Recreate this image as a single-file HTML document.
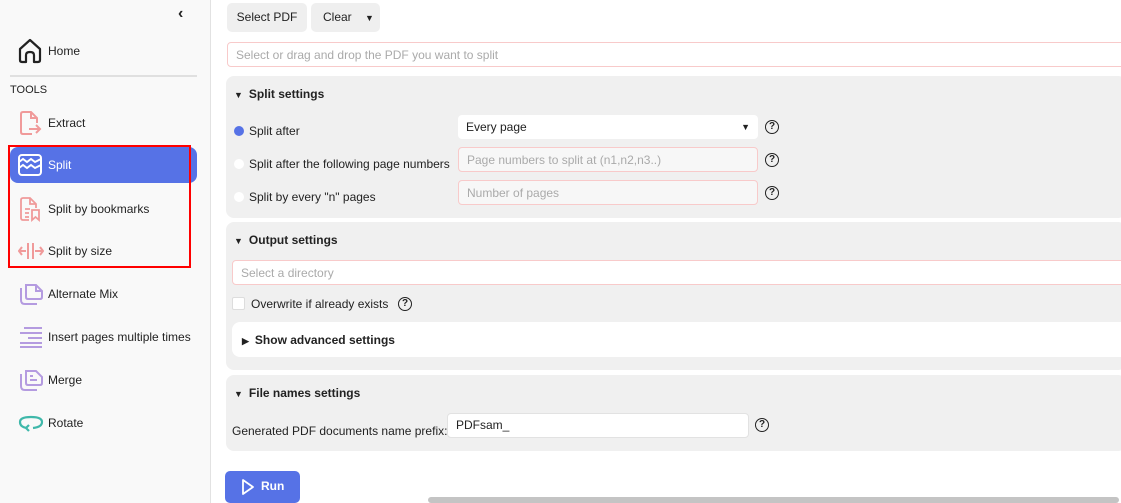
<!DOCTYPE html>
<html><head><meta charset="utf-8"><style>
*{box-sizing:border-box;margin:0;padding:0}
body{width:1121px;height:503px;overflow:hidden;background:#fff;font-family:"Liberation Sans",sans-serif;font-size:12px;color:#222;position:relative}
.sb{position:absolute;left:0;top:0;width:211px;height:503px;background:#f9f9f9;border-right:1px solid #e2e2e2}
.it{position:absolute;left:10px;width:187px;height:36px;display:flex;align-items:center;font-size:12px}
.it svg{position:absolute;left:8px}
.it span{position:absolute;left:38px}
.a{position:absolute}
.panel{position:absolute;left:226px;width:900px;background:#f0f0f0;border-radius:8px}
.h{position:absolute;font-weight:bold;font-size:12px}
.in{position:absolute;background:#fff;border:1px solid #f8caca;border-radius:4px;color:#aaa;font-size:12px;padding-left:8px;display:flex;align-items:center}
.q{position:absolute;width:14px;height:14px;border:1.5px solid #222;border-radius:50%;font-size:10px;font-weight:bold;text-align:center;line-height:11px}
.tri{font-size:9px;margin-right:6px}
</style></head><body>
<div class="sb">
<div class="a" style="left:178px;top:5px;font-size:16px;font-weight:bold">&#8249;</div>
<div class="it" style="top:33px"><svg width="24" height="26" viewBox="0 0 24 26"><path d="M2 11 L12 2 L22 11 V22 Q22 24 20 24 H16 V17 Q16 14 12 14 Q8 14 8 17 V24 H4 Q2 24 2 22 Z" fill="none" stroke="#222" stroke-width="2.2" stroke-linejoin="round"/></svg><span>Home</span></div>
<div class="a" style="left:10px;top:75px;width:187px;height:2px;background:#e0e0e0"></div>
<div class="a" style="left:10px;top:84px;font-size:11px">TOOLS</div>
<div class="it" style="top:105px"><svg width="24" height="26" viewBox="0 0 24 26"><path d="M14 24 H5 Q3 24 3 22 V4 Q3 2 5 2 H13 L19 8 V13 M13 2 V8 H19 M11 19 H22 M18 15 L22 19 L18 23" fill="none" stroke="#f09a9a" stroke-width="2"/></svg><span>Extract</span></div>
<div class="it" style="top:147px;background:#5672e6;border-radius:8px;color:#fff"><svg width="24" height="24" viewBox="0 0 24 24"><rect x="1" y="2" width="22" height="20" rx="3" fill="none" stroke="#fff" stroke-width="2"/><path d="M1 9 L5 6 L9 9 L13 6 L17 9 L23 6 M1 15 L5 12 L9 15 L13 12 L17 15 L23 12" fill="none" stroke="#fff" stroke-width="2"/></svg><span>Split</span></div>
<div class="it" style="top:191px"><svg width="24" height="26" viewBox="0 0 24 26"><path d="M11 24 H5 Q3 24 3 22 V4 Q3 2 5 2 H12 L18 8 V12 M12 2 V8 H18 M7 13 H12 M7 17 H11 M7 21 H11 M14 14 H21 V24 L17.5 21 L14 24 Z" fill="none" stroke="#f09a9a" stroke-width="1.8"/></svg><span>Split by bookmarks</span></div>
<div class="it" style="top:233px"><svg width="26" height="20" viewBox="0 0 26 20"><path d="M10 2 V18 M15 2 V18 M1 10 H8 M4 6 L1 10 L4 14 M17 10 H25 M22 6 L25 10 L22 14" fill="none" stroke="#f09a9a" stroke-width="2"/></svg><span>Split by size</span></div>
<div class="it" style="top:276px"><svg width="26" height="24" viewBox="0 0 26 24"><path d="M3 6 V18 Q3 22 7 22 H19 M8 3 H18 L24 9 V15 Q24 17 22 17 H10 Q8 17 8 15 Z M18 3 V9 H24" fill="none" stroke="#b49be0" stroke-width="2"/></svg><span>Alternate Mix</span></div>
<div class="it" style="top:319px"><svg width="26" height="24" viewBox="0 0 26 24"><path d="M6 3 H24 M2 8 H24 M10 13 H24 M2 18 H24 M2 22 H24" stroke="#b49be0" stroke-width="2"/></svg><span>Insert pages multiple times</span></div>
<div class="it" style="top:362px"><svg width="26" height="24" viewBox="0 0 26 24"><path d="M3 6 V18 Q3 22 7 22 H19 M8 3 H18 L24 9 V15 Q24 17 22 17 H10 Q8 17 8 15 Z M12 8 H15 M12 12 H19" fill="none" stroke="#b49be0" stroke-width="2"/></svg><span>Merge</span></div>
<div class="it" style="top:405px"><svg width="26" height="20" viewBox="0 0 26 20"><path d="M9 15 Q2 14 2 9 Q2 4 13 4 Q24 4 24 9 Q24 14 15 15 M11 12 L8 15 L11 18" fill="none" stroke="#3fb8aa" stroke-width="2.2"/></svg><span>Rotate</span></div>
</div>
<div class="a" style="left:8px;top:145px;width:183px;height:123px;border:2px solid #f00"></div>

<div class="a" style="left:227px;top:3px;width:80px;height:29px;background:#efefef;border-radius:5px;text-align:center;line-height:29px">Select PDF</div>
<div class="a" style="left:311px;top:3px;width:69px;height:29px;background:#efefef;border-radius:5px;line-height:29px;padding-left:12px">Clear <span style="font-size:9px;margin-left:10px">&#9660;</span></div>
<div class="in" style="left:227px;top:42px;width:900px;height:25px">Select or drag and drop the PDF you want to split</div>

<div class="panel" style="top:76px;height:142px"></div>
<div class="h" style="left:234px;top:87px"><span class="tri">&#9660;</span>Split settings</div>
<div class="a" style="left:234px;top:126px;width:10px;height:10px;border-radius:50%;background:#5672e6"></div>
<div class="a" style="left:249px;top:124px">Split after</div>
<div class="a" style="left:458px;top:115px;width:300px;height:24px;background:#fff;border-radius:4px;padding-left:8px;line-height:24px">Every page<span style="position:absolute;right:8px;font-size:9px">&#9660;</span></div>
<div class="q" style="left:765px;top:120px">?</div>
<div class="a" style="left:234px;top:159px;width:10px;height:10px;border-radius:50%;background:#fff"></div>
<div class="a" style="left:249px;top:157px">Split after the following page numbers</div>
<div class="in" style="left:458px;top:147px;width:300px;height:25px;background:#f7f7f7">Page numbers to split at (n1,n2,n3..)</div>
<div class="q" style="left:765px;top:153px">?</div>
<div class="a" style="left:234px;top:192px;width:10px;height:10px;border-radius:50%;background:#fff"></div>
<div class="a" style="left:249px;top:190px">Split by every "n" pages</div>
<div class="in" style="left:458px;top:180px;width:300px;height:25px;background:#f7f7f7">Number of pages</div>
<div class="q" style="left:765px;top:186px">?</div>

<div class="panel" style="top:222px;height:148px"></div>
<div class="h" style="left:234px;top:233px"><span class="tri">&#9660;</span>Output settings</div>
<div class="in" style="left:232px;top:260px;width:900px;height:25px">Select a directory</div>
<div class="a" style="left:232px;top:297px;width:13px;height:13px;background:#fff;border:1px solid #ddd;border-radius:2px"></div>
<div class="a" style="left:251px;top:297px">Overwrite if already exists</div>
<div class="q" style="left:398px;top:297px">?</div>
<div class="a" style="left:232px;top:322px;width:900px;height:35px;background:#fff;border-radius:8px"></div>
<div class="h" style="left:242px;top:333px"><span class="tri">&#9654;</span>Show advanced settings</div>

<div class="panel" style="top:375px;height:76px"></div>
<div class="h" style="left:234px;top:386px"><span class="tri">&#9660;</span>File names settings</div>
<div class="a" style="left:232px;top:424px">Generated PDF documents name prefix:</div>
<div class="a" style="left:447px;top:413px;width:302px;height:25px;background:#fff;border:1px solid #e2e2e2;border-radius:4px;padding-left:8px;line-height:22px">PDFsam_</div>
<div class="q" style="left:755px;top:418px">?</div>

<div class="a" style="left:225px;top:471px;width:75px;height:32px;background:#5672e6;border-radius:5px;color:#fff;font-weight:bold;line-height:31px;padding-left:36px">Run</div>
<svg class="a" style="left:241px;top:478px" width="14" height="18" viewBox="0 0 14 18"><path d="M2 2 L12 9 L2 16 Z" fill="none" stroke="#fff" stroke-width="1.8" stroke-linejoin="round"/></svg>
<div class="a" style="left:428px;top:497px;width:691px;height:6px;background:#c4c4c4;border-radius:3px"></div>
</body></html>
